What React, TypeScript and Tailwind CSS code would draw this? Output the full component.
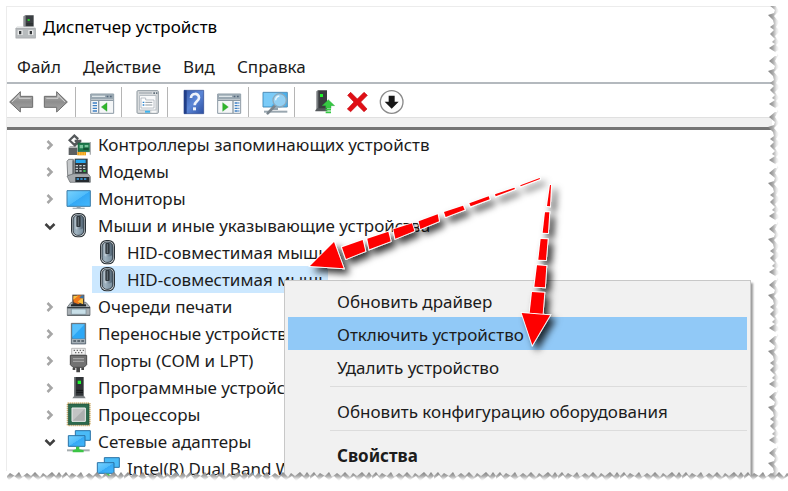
import { useState, type ReactNode } from 'react'
import clsx from 'clsx'

type Node = {
  label: string
  icon: ReactNode
  children?: { label: string; icon: ReactNode }[]
}

function Icon({ children }: { children: ReactNode }) {
  return (
    <svg viewBox="0 0 72 72" className="w-6 h-6 shrink-0 overflow-visible" aria-hidden="true">
      {children}
    </svg>
  )
}

/* Title and toolbar icons */

const managerIcon = (
  <Icon>
    <path d="M26 4l6-3h24v34H26z" fill="#3b3f43" />
    <path d="M26 4l6-3v34h-6z" fill="#8b8f93" />
    <rect x="38" y="12" width="6" height="6" fill="#29d32d" />
    <path d="M34 26h20M34 30h20" stroke="#25282b" strokeWidth="2" />
    <path d="M6 35h52l4 5v30H2V40z" fill="#b7bbbd" />
    <path d="M6 35h52l4 5H2z" fill="#e3e5e6" />
    <rect x="3" y="41" width="58" height="28" fill="none" stroke="#a4a8ab" strokeWidth="2" />
    <path d="M8 46h15v14H8zM40 46h15v14H40z" fill="#eceded" />
    <path d="M12 48h7v10h-7zM44 48h7v10h-7z" fill="#35393c" />
  </Icon>
)

function ArrowIcon({ flip }: { flip?: boolean }) {
  return (
    <Icon>
      <defs>
        <linearGradient id="arrowFill" x1="0" y1="0" x2="0" y2="1">
          <stop offset="0" stopColor="#b5b5b5" />
          <stop offset="0.5" stopColor="#8e8e8e" />
          <stop offset="1" stopColor="#a9a9a9" />
        </linearGradient>
      </defs>
      <path
        d="M2 36L34 5v14h37v33H34v14z"
        transform={flip ? 'matrix(-1 0 0 1 72 0)' : undefined}
        fill="url(#arrowFill)"
        stroke="#6c6c6c"
        strokeWidth="3"
        strokeLinejoin="round"
      />
      <path
        d="M9 36l21-20v9h35"
        transform={flip ? 'matrix(-1 0 0 1 72 0)' : undefined}
        fill="none"
        stroke="#d2d2d2"
        strokeWidth="3"
      />
    </Icon>
  )
}

function PaneIcon({ right }: { right?: boolean }) {
  return (
    <Icon>
      <path d="M2 12h69v58H2z" fill="#f4f6f7" stroke="#8c9aa5" strokeWidth="3" />
      <path d="M2 12h69v16H2z" fill="#9aa8b2" />
      <path d="M6 19h39" stroke="#dfe6ea" strokeWidth="4" />
      <path d="M50 17h5v5h-5zM60 17h5v5h-5z" fill="#52657a" />
      <path d="M3 31h67" stroke="#8c9aa5" strokeWidth="4" />
      {right ? (
        <>
          <path d="M48 31v38" stroke="#8c9aa5" strokeWidth="4" />
          <path d="M53 39h14M53 47h14M53 55h14M53 63h14" stroke="#3c7fc4" strokeWidth="4" strokeDasharray="9 2" />
          <path d="M17 38l17 13-17 13z" fill="#2fb52b" stroke="#22962a" strokeWidth="1" />
        </>
      ) : (
        <>
          <path d="M26 31v38" stroke="#8c9aa5" strokeWidth="4" />
          <path d="M8 39h13M8 47h13M8 55h13M8 63h13" stroke="#3c7fc4" strokeWidth="4" />
          <path d="M51 38L34 51l17 13z" fill="#2fb52b" stroke="#22962a" strokeWidth="1" />
        </>
      )}
    </Icon>
  )
}

const propertiesIcon = (
  <Icon>
    <rect x="3" y="2" width="64" height="68" rx="3" fill="#d9dcde" stroke="#8d979e" strokeWidth="3" />
    <path d="M9 9h39" stroke="#b0b7bc" strokeWidth="5" />
    <path d="M52 7h5v5h-5zM60 7h4v5h-4z" fill="#61707c" />
    <rect x="11" y="17" width="49" height="43" fill="#f9fafb" stroke="#a2abb2" strokeWidth="2" />
    <path d="M15 24h14v6h25v24H15z" fill="#fff" stroke="#9ba5ad" strokeWidth="2" />
    <path d="M20 37h5M20 45h5" stroke="#2a83cf" strokeWidth="4" />
    <path d="M28 37h21M28 45h21" stroke="#8d979e" strokeWidth="3" />
    <path d="M27 62h15v6H27z" fill="#3bb3ee" />
    <path d="M46 62h15v6H46z" fill="#f7f8f8" />
  </Icon>
)

const helpIcon = (
  <Icon>
    <defs>
      <linearGradient id="helpFill" x1="0" y1="0" x2="1" y2="1">
        <stop offset="0" stopColor="#3457a8" />
        <stop offset="0.5" stopColor="#5b86d6" />
        <stop offset="1" stopColor="#2c4fa2" />
      </linearGradient>
    </defs>
    <path d="M6 1h59v70H6z" fill="url(#helpFill)" stroke="#27448d" strokeWidth="2" />
    <path d="M6 1h8v70H6z" fill="#213e88" />
    <path
      d="M27 24c0-16 24-16 24-1 0 11-13 11-13 23"
      fill="none"
      stroke="#eef2fa"
      strokeWidth="8"
    />
    <rect x="33" y="52" width="9" height="9" fill="#eef2fa" />
  </Icon>
)

const scanIcon = (
  <Icon>
    <path d="M0 7h73v44H0z" fill="#49b1ee" stroke="#5590b7" strokeWidth="3" />
    <path d="M2 9h50L25 49H2z" fill="#7acbf8" />
    <path d="M28 52h17v8H28z" fill="#93a3ae" />
    <path d="M3 65h70" stroke="#9aa7b0" strokeWidth="6" />
    <path d="M35 48L14 70" stroke="#7a858d" strokeWidth="8" strokeLinecap="round" />
    <circle cx="50" cy="31" r="20" fill="#a5d8f5" fillOpacity="0.8" stroke="#8ba9bc" strokeWidth="4" />
    <path d="M38 31c0-8 5-12 11-13" fill="none" stroke="#e9f7ff" strokeWidth="4" />
  </Icon>
)

const updateIcon = (
  <Icon>
    <path d="M23 4l5-3h26v57H23z" fill="#393c3f" />
    <path d="M23 4l5-3v58h-5z" fill="#777b7e" />
    <path d="M19 61l6-6h27l4 9H19z" fill="#55595c" />
    <rect x="33" y="12" width="9" height="9" fill="#1ff32b" />
    <path d="M58 29l19 18H66v8H50v-8H39z" fill="#36c843" stroke="#229434" strokeWidth="1" />
    <path d="M50 59h16M50 67h16" stroke="#36c843" strokeWidth="5" />
  </Icon>
)

const removeIcon = (
  <Icon>
    <path
      d="M20 7l20 20L60 7l10 9-20 20 19 21-9 8-20-20-20 20-10-8 20-21-19-20z"
      fill="#e00f16"
      stroke="#c60b12"
      strokeWidth="2"
      strokeLinejoin="round"
    />
  </Icon>
)

const downIcon = (
  <Icon>
    <circle cx="38" cy="36" r="34" fill="#fdfdfd" stroke="#8a8a8a" strokeWidth="4" />
    <path d="M29 17h18v18h12L38 56 17 35h12z" fill="#161616" />
  </Icon>
)

/* Tree icons */

const storageIcon = (
  <Icon>
    <path d="M8 44h26v22H8z" fill="#5b5f62" />
    <path d="M8 44h26l-4-5H12z" fill="#a9acae" />
    <path d="M25 3l14 13-5 5-9-8-10 9 10 9 5-4h-4v-7h20v7L26 41 6 22z" fill="#54585b" />
    <path d="M36 30h36v26H36z" fill="#1e7a4d" stroke="#175a3a" strokeWidth="2" />
    <path d="M41 36h10v10H41zM56 36h11v7H56z" fill="#7bc39c" />
    <path d="M52 48h16" stroke="#0e4128" strokeWidth="4" />
    <path d="M73 27v38" stroke="#abb0b2" strokeWidth="4" />
    <path d="M34 57h26v10H34z" fill="#f0a11a" />
    <path d="M41 58v8M48 58v8M55 58v8" stroke="#ffd45e" strokeWidth="2" />
  </Icon>
)

const modemIcon = (
  <Icon>
    <path d="M26-4h39v48H26z" fill="#33383c" />
    <path d="M3 4l5-6h14l3 6v42H5z" fill="#c6c9cb" stroke="#55595c" strokeWidth="2" />
    <path d="M19 1h5v43h-5z" fill="#6b6f72" />
    <path d="M29-1h30v10H29z" fill="#27a6ee" />
    <path d="M29 17h7M40 17h7M51 17h7M29 25h7M40 25h7M51 25h7M29 33h7M40 33h7" stroke="#c8ced2" strokeWidth="4" />
    <path d="M52 33h7" stroke="#37d552" strokeWidth="5" />
    <path d="M3 48l20-7h43l7 9v17H12z" fill="#a6a9ac" stroke="#5d6265" strokeWidth="2" />
    <path d="M28 51h42v15H28z" fill="#252b30" />
    <path d="M32 57h7M43 57h7M54 57h7" stroke="#3ca8ed" strokeWidth="5" />
  </Icon>
)

const monitorIcon = (
  <Icon>
    <defs>
      <linearGradient id="screenFill" x1="0" y1="0" x2="1" y2="1">
        <stop offset="0" stopColor="#79d2fd" />
        <stop offset="0.5" stopColor="#4fbcfb" />
        <stop offset="0.52" stopColor="#35a9f5" />
        <stop offset="1" stopColor="#43b7fc" />
      </linearGradient>
    </defs>
    <path d="M3 11h70v47H3z" fill="url(#screenFill)" stroke="#3d7ca8" strokeWidth="3" />
    <path d="M32 59h12v4H32z" fill="#8d9aa3" />
    <path d="M20 64h36" stroke="#aab4bb" strokeWidth="4" />
  </Icon>
)

const mouseIcon = (
  <Icon>
    <defs>
      <linearGradient id="mouseFill" x1="0" y1="0" x2="1" y2="0">
        <stop offset="0" stopColor="#6f8391" />
        <stop offset="0.3" stopColor="#c1ced7" />
        <stop offset="0.55" stopColor="#8395a3" />
        <stop offset="1" stopColor="#435666" />
      </linearGradient>
    </defs>
    <rect x="15" y="-3" width="45" height="73" rx="19" fill="#2c3338" />
    <rect x="18" y="0" width="39" height="67" rx="17" fill="#dce2e6" />
    <rect x="21" y="3" width="33" height="61" rx="15" fill="url(#mouseFill)" stroke="#39434b" strokeWidth="3" />
    <path d="M24 43c8 5 20 5 27 0v8c0 14-27 14-27 0z" fill="#93a8b7" fillOpacity="0.7" />
    <rect x="31" y="6" width="13" height="33" rx="3" fill="#30383e" />
    <path d="M37 9v27" stroke="#69757e" strokeWidth="3" />
  </Icon>
)

const printerIcon = (
  <Icon>
    <path d="M19-1h36v34H19z" fill="#493b38" />
    <path d="M22 8L35 1h17v11L38 28 23 22z" fill="#ef7719" />
    <path d="M22 2h15L22 14zM35 20l16-13v21z" fill="#f8c244" />
    <path d="M40 8l7-7h6v10z" fill="#3b75a7" />
    <path d="M4 36l11-14h5v8h34v-8h6l12 14v25H4z" fill="#aab1b6" stroke="#565f65" strokeWidth="2" />
    <path d="M15 31h45" stroke="#202629" strokeWidth="6" />
    <path d="M4 38h68" stroke="#353d42" strokeWidth="4" />
    <path d="M16 42h44v16H16z" fill="#c8dfe8" stroke="#768b96" strokeWidth="2" />
    <path d="M4 61h68" stroke="#596166" strokeWidth="3" />
  </Icon>
)

const portableIcon = (
  <Icon>
    <path d="M16 4h43v62H16z" fill="#697783" stroke="#485661" strokeWidth="2" />
    <path d="M19 7h37v43H19z" fill="#2da8f6" />
    <path d="M19 7h37L19 45z" fill="#57c0fc" />
    <path d="M18 51h39v13H18z" fill="#a5afb6" />
    <path d="M22 57h8M34 57h8M46 57h8" stroke="#5e6a73" strokeWidth="6" />
  </Icon>
)

const portIcon = (
  <Icon>
    <path d="M17-2h41v20H17z" fill="#f0f0f0" stroke="#9f9f9f" strokeWidth="2" />
    <path d="M23 2h4v4h-4zM32 2h4v4h-4zM41 2h4v4h-4zM50 2h4v4h-4zM27 9h4v4h-4zM36 9h4v4h-4zM45 9h4v4h-4z" fill="#6c6c6c" />
    <path d="M13 19h49v28l-8 8H21l-8-8z" fill="#727272" stroke="#464646" strokeWidth="3" />
    <path d="M21 27h33v4H21zM21 35h33v4H21z" fill="#a3a3a3" />
    <path d="M20 56h8v7h-8zM46 56h8v7h-8zM31 55h11v15H31z" fill="#484848" />
  </Icon>
)

const softwareIcon = (
  <Icon>
    <path d="M25 3h28v57H25z" fill="#303437" />
    <path d="M25 3h4v57h-4z" fill="#777b7e" />
    <rect x="35" y="14" width="10" height="10" fill="#1df630" />
    <path d="M31 43h20M31 49h20" stroke="#15181a" strokeWidth="3" />
    <path d="M19 67l6-8h29l5 8z" fill="#7b7f82" />
  </Icon>
)

const cpuIcon = (
  <Icon>
    <rect x="5" y="1" width="66" height="66" fill="none" stroke="#c29a48" strokeWidth="6" strokeDasharray="3 3" />
    <path d="M7 3h62v62H7z" fill="#2c6a4d" stroke="#1d4e37" strokeWidth="2" />
    <path d="M18 15h40v40H18z" fill="#c2c4c4" stroke="#eef0ef" strokeWidth="3" />
    <path d="M20 53l36-36v36z" fill="#acafaf" />
  </Icon>
)

function Network({ small }: { small?: boolean }) {
  return (
    <Icon>
      <path d="M28 2h45v29H28z" fill="#4abbf7" stroke="#2972a7" strokeWidth="3" />
      <path d="M7 17h50v32H7z" fill="url(#screenFill)" stroke="#2972a7" strokeWidth="3" />
      {small ? (
        <path d="M28 50h14l6 12-7 2-12-8z" fill="#43c84a" />
      ) : (
        <>
          <path d="M3 61h68" stroke="#a5adaf" strokeWidth="6" />
          <path d="M30 50h10v8l13 3v6H20v-6l10-3z" fill="#3cc545" />
        </>
      )}
    </Icon>
  )
}

const devices: Node[] = [
  { label: 'Контроллеры запоминающих устройств', icon: storageIcon },
  { label: 'Модемы', icon: modemIcon },
  { label: 'Мониторы', icon: monitorIcon },
  {
    label: 'Мыши и иные указывающие устройства',
    icon: mouseIcon,
    children: [
      { label: 'HID-совместимая мышь', icon: mouseIcon },
      { label: 'HID-совместимая мышь', icon: mouseIcon },
    ],
  },
  { label: 'Очереди печати', icon: printerIcon },
  { label: 'Переносные устройства', icon: portableIcon },
  { label: 'Порты (COM и LPT)', icon: portIcon },
  { label: 'Программные устройства', icon: softwareIcon },
  { label: 'Процессоры', icon: cpuIcon },
  {
    label: 'Сетевые адаптеры',
    icon: <Network />,
    children: [{ label: 'Intel(R) Dual Band WiFi', icon: <Network small /> }],
  },
]

const toolbar = [
  [
    { label: 'Назад', icon: <ArrowIcon /> },
    { label: 'Вперед', icon: <ArrowIcon flip /> },
  ],
  [{ label: 'Дерево консоли', icon: <PaneIcon /> }],
  [{ label: 'Свойства', icon: propertiesIcon }],
  [
    { label: 'Справка', icon: helpIcon },
    { label: 'Область действий', icon: <PaneIcon right /> },
  ],
  [{ label: 'Обновить конфигурацию', icon: scanIcon }],
  [
    { label: 'Обновить драйвер', icon: updateIcon },
    { label: 'Удалить', icon: removeIcon },
    { label: 'Отключить', icon: downIcon },
  ],
]

function ContextMenu() {
  const item = 'block w-full h-[33px] pt-[2px] pl-12 text-left whitespace-nowrap border border-transparent'
  return (
    <div
      role="menu"
      className="absolute left-[284px] top-[280px] w-[467px] h-[206px] p-[3px] bg-[#f1f1f1] border border-[#c8c8c8] shadow-[2px_3px_2px_rgba(0,0,0,0.4)]"
    >
      <button role="menuitem" className={item}>Обновить драйвер</button>
      <button role="menuitem" className={clsx(item, 'bg-[#91c9f7] border-[#a8d6fa]')}>Отключить устройство</button>
      <button role="menuitem" className={item}>Удалить устройство</button>
      <hr className="ml-[42px] mt-[3px] mb-[7px] border-[#dcdcdc]" />
      <button role="menuitem" className={item}>Обновить конфигурацию оборудования</button>
      <hr className="ml-[42px] mt-[3px] mb-[7px] border-[#dcdcdc]" />
      <button role="menuitem" className={clsx(item, 'font-bold')}>Свойства</button>
    </div>
  )
}

function Pointers() {
  return (
    <svg
      viewBox="0 0 840 600"
      className="absolute left-[300px] top-[160px] w-[280px] h-[200px] overflow-visible pointer-events-none"
      aria-hidden="true"
    >
      <defs>
        <filter id="pointerShadow" x="-20%" y="-20%" width="150%" height="150%">
          <feDropShadow dx="14" dy="14" stdDeviation="11" floodColor="#000" floodOpacity="0.8" />
        </filter>
      </defs>
      <g fill="#fe0000" stroke="#fff" strokeWidth="5" paintOrder="stroke" filter="url(#pointerShadow)">
        <path d="M30 318L102 246L131 325Z" />
        <path d="M126 262L188 240L196 274L138 297Z" />
        <path d="M202 236L265 215L272 244L208 268Z" />
        <path d="M280 208L336 190L343 213L286 236Z" />
        <path d="M356 184L413 163L417 184L361 207Z" />
        <path d="M432 156L489 137L494 149L437 171Z" />
        <path d="M508 130L566 109L569 118L512 139Z" />
        <path d="M585 103L643 83L645 87L587 109Z" />
        <path d="M661 76L719 54L720 57L662 79Z" />
        <path d="M696 396L733 398L728 463L689 459Z" />
        <path d="M711 316L739 318L735 382L703 380Z" />
        <path d="M722 237L743 238L738 300L715 299Z" />
        <path d="M735 157L748 157L744 219L728 218Z" />
        <path d="M750 75L753 75L750 139L741 138Z" />
        <path d="M697 555L665 459L750 466Z" />
      </g>
    </svg>
  )
}

// Ragged paper edge: the notch pattern repeats, so it works at any window size
function TornEdges() {
  return (
    <>
      <svg className="absolute right-0 top-0 w-[21px] h-full" aria-hidden="true">
        <defs>
          <linearGradient id="tornRight" gradientUnits="userSpaceOnUse" x1="0" y1="0" x2="12" y2="0">
            <stop offset="0" stopColor="#777" />
            <stop offset="0.5" stopColor="#aaa" />
            <stop offset="0.8" stopColor="#e8e8e8" />
            <stop offset="1" stopColor="#fff" />
          </linearGradient>
          <pattern id="notchesRight" width="21" height="56" patternUnits="userSpaceOnUse">
            <path d="M21 0H8L2 5l6 5-1 3-6 2 5 5 1 4-4 3 4 3-4 4 5 5-3 3 3 2-6 4 3 2 5 3v3h13z" fill="url(#tornRight)" />
            <path d="M21 0H11L8 5l4 6-5 5 5 6-3 5 4 4-5 5 4 6-3 3 4 4-5 3 4 4h9z" fill="#fff" />
          </pattern>
        </defs>
        <rect width="21" height="100%" fill="url(#notchesRight)" />
        <rect width="21" height="6" fill="#fff" />
      </svg>
      <svg className="absolute bottom-0 left-0 w-full h-[20px]" aria-hidden="true">
        <defs>
          <linearGradient id="tornBottom" gradientUnits="userSpaceOnUse" x1="0" y1="0" x2="0" y2="10">
            <stop offset="0" stopColor="#777" />
            <stop offset="0.5" stopColor="#aaa" />
            <stop offset="0.8" stopColor="#e8e8e8" />
            <stop offset="1" stopColor="#fff" />
          </linearGradient>
          <pattern id="notchesBottom" width="62" height="20" patternUnits="userSpaceOnUse">
            <path d="M0 20V5l4-4 3 4 3-3 5 3 4-4 3 5 5-4 4 3 4-4 5 5 3-4 4 3 5-4 4 4 3-4 3 4v15z" fill="url(#tornBottom)" />
            <path d="M0 20V8l5-4 4 5 5-4 5 4 5-4 5 5 4-5 5 4 6-4 4 5 6-5 4 4 4-4v15z" fill="#fff" />
          </pattern>
        </defs>
        <rect width="100%" height="20" fill="url(#notchesBottom)" />
        <rect width="7" height="20" fill="#fff" />
      </svg>
    </>
  )
}

export default function App() {
  const [closed, setClosed] = useState<string[]>([])

  const toggle = (label: string) => {
    setClosed(prev => (prev.includes(label) ? prev.filter(l => l !== label) : [...prev, label]))
  }

  return (
    <div className="relative h-screen overflow-hidden bg-white pl-[6px] pt-[6px] pr-4 font-['Noto_Sans',sans-serif] text-[17px] leading-[27px] text-[#1c1c1c]">
      <div className="flex flex-col h-full border-l border-t border-[#ececec]">
        {/* Title */}
        <header className="flex items-center gap-1 h-[39px] shrink-0 pl-2 text-black">
          {managerIcon}
          <h1>Диспетчер устройств</h1>
        </header>

        {/* Menu */}
        <nav className="flex gap-[22px] h-[38px] shrink-0 items-center pt-1 pl-[10px] border-b-2 border-[#b4b9be]">
          <button>Файл</button>
          <button>Действие</button>
          <button>Вид</button>
          <button>Справка</button>
        </nav>

        {/* Toolbar */}
        <div className="flex h-[33px] shrink-0 items-center pt-[2px]">
          {toolbar.map((group, i) => (
            <div
              key={i}
              className={clsx(
                'flex items-center gap-[11px] h-[30px] pr-[7px]',
                i === 0 ? 'pl-[2px]' : 'pl-[14px]',
                i < toolbar.length - 1 && 'border-r border-[#b5b5b5]'
              )}
            >
              {group.map(b => (
                <button key={b.label} aria-label={b.label}>{b.icon}</button>
              ))}
            </div>
          ))}
        </div>
        <div className="h-[13px] shrink-0 bg-[#f0f0f0] border-t border-[#e0e0e0] border-b-3 border-b-[#747474]" />

        {/* Device tree */}
        <ul className="flex-1 min-h-0 pt-px whitespace-nowrap">
          {devices.map(d => {
            const open = !!d.children && !closed.includes(d.label)
            return (
              <li key={d.label}>
                <div className="flex items-center h-[27px] pl-[38px]">
                  <button aria-label={d.label} aria-expanded={open} onClick={() => toggle(d.label)} className="w-[10px] mr-[11px]">
                    <svg viewBox="0 0 20 20" className="w-[10px] h-[10px] overflow-visible" fill="none" strokeWidth="5" aria-hidden="true">
                      {open ? <path d="M1 6l9 9 9-9" stroke="#3f3f3f" /> : <path d="M5 2l8 8-8 8" stroke="#a6a6a6" />}
                    </svg>
                  </button>
                  {d.icon}
                  <span className="ml-2">{d.label}</span>
                </div>
                {open && (
                  <ul>
                    {d.children!.map((c, i) => (
                      <li key={i} className="flex pl-[85px]">
                        <div className={clsx('flex items-center h-[27px] pl-[3px]', i === 1 && 'bg-[#cce8ff]')}>
                          {c.icon}
                          <span className="ml-2">{c.label}</span>
                        </div>
                      </li>
                    ))}
                  </ul>
                )}
              </li>
            )
          })}
        </ul>
      </div>

      <ContextMenu />
      <TornEdges />
      <Pointers />
    </div>
  )
}
